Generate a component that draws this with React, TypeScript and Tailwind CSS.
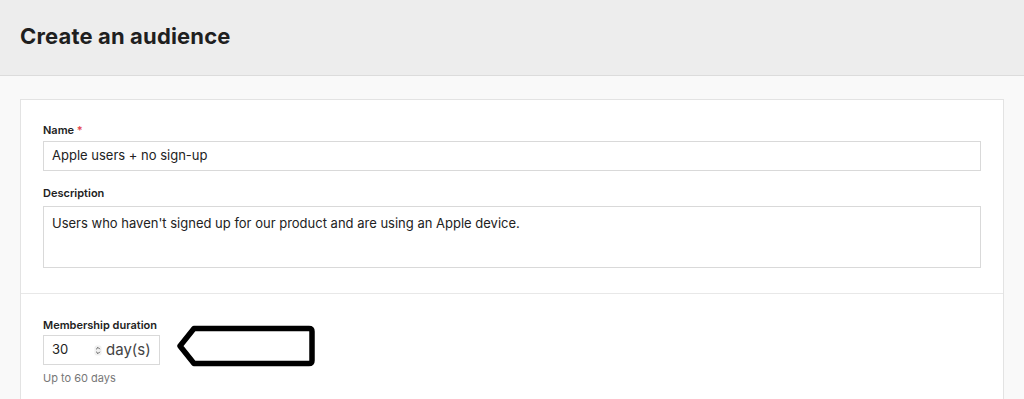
import React from "react";

export default function App() {
  return (
    <div className="w-[1024px] h-[399px] overflow-hidden bg-[#f9f9f9] font-['Inter',sans-serif] text-[#222]">
      <div className="h-[76px] bg-[#ededed] border-b border-[#dcdcdc] px-5 flex items-center">
        <h1 className="text-[22px] font-bold text-[#1f1f1f] tracking-[0.15px] mt-[-2px]">Create an audience</h1>
      </div>
      <div className="pt-[23px] pl-5 pr-[20px]">
        <div className="bg-white border border-[#e3e3e3] w-[984px]">
          <div className="px-[22px] pt-[22px] pb-[25px] border-b border-[#e8e8e8]">
            <div className="text-[11px] font-semibold text-[#222] leading-[16px] mb-[3px]">
              Name <span className="text-[#e5484d]">*</span>
            </div>
            <div className="h-[30px] w-[938px] border border-[#d9d9d9] flex items-center px-2 text-[13px] text-[#222]">
              Apple users + no sign-up
            </div>
            <div className="text-[11px] font-semibold text-[#222] leading-[16px] mt-[14px] mb-[5px]">Description</div>
            <div className="h-[62px] w-[938px] border border-[#d9d9d9] px-2 pt-[7px] text-[13px] text-[#222] leading-[18px]">
              Users who haven't signed up for our product and are using an Apple device.
            </div>
          </div>
          <div className="px-[22px] pt-[23px] pb-[20px] flex items-start">
            <div>
              <div className="text-[11px] font-semibold text-[#222] leading-[16px] mb-[2px]">Membership duration</div>
              <div className="h-[30px] w-[117px] border border-[#d9d9d9] flex items-center pl-2 text-[13px] text-[#222]">
                <span className="w-[42px]">30</span>
                <svg width="8" height="11" viewBox="0 0 8 11" className="mr-[4px]">
                  <rect x="0.5" y="0.5" width="7" height="10" rx="2" fill="#f0f0f0" />
                  <path d="M2.2 4.2 L4 2.4 L5.8 4.2" fill="none" stroke="#555" strokeWidth="1" />
                  <path d="M2.2 6.8 L4 8.6 L5.8 6.8" fill="none" stroke="#555" strokeWidth="1" />
                </svg>
                <span className="text-[15px] text-[#444]">day(s)</span>
              </div>
              <div className="text-[11px] text-[#777] mt-[5px]">Up to 60 days</div>
            </div>
            <svg width="142" height="46" viewBox="0 0 142 46" className="ml-[15px] mt-[7px]">
              <path
                d="M134 4.5 Q137 4.5 137 7.5 L137 36.5 Q137 39.5 134 39.5 L19 39.5 L5 22 L19 4.5 Z"
                fill="white"
                stroke="black"
                strokeWidth="5.5"
                strokeLinejoin="round"
              />
            </svg>
          </div>
        </div>
      </div>
    </div>
  );
}
